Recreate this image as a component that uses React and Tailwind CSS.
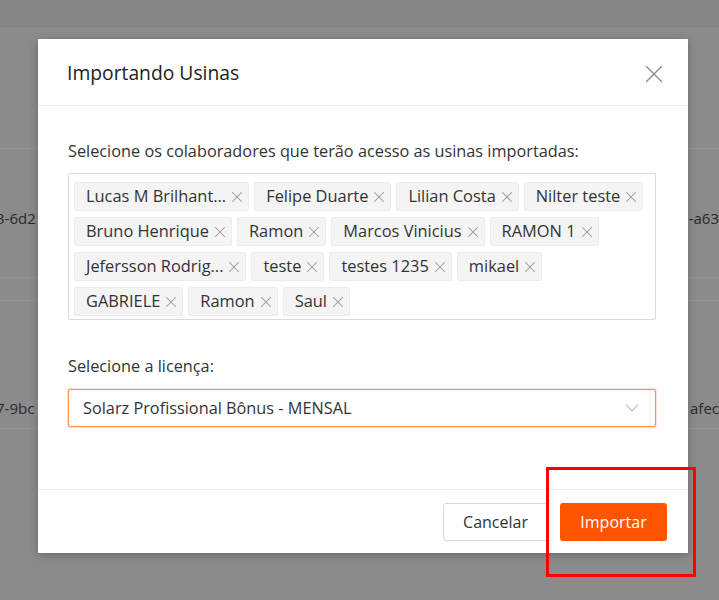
import { X, ChevronDown } from 'lucide-react';

const TAGS = [
  'Lucas M Brilhant...',
  'Felipe Duarte',
  'Lilian Costa',
  'Nilter teste',
  'Bruno Henrique',
  'Ramon',
  'Marcos Vinicius',
  'RAMON 1',
  'Jefersson Rodrig...',
  'teste',
  'testes 1235',
  'mikael',
  'GABRIELE',
  'Ramon',
  'Saul',
];

function Tag({ label }) {
  return (
    <span className="inline-flex items-center h-[29px] pl-[11px] pr-[2px] bg-[#f4f4f4] border border-[#ececec] rounded-[2px] text-[16.4px] text-[#333] leading-none">
      {label}
      <X className="ml-[2px] w-[18px] h-[18px] text-[#999]" strokeWidth={1.4} />
    </span>
  );
}

export default function App() {
  return (
    <div className="relative w-[719px] h-[600px] overflow-hidden bg-[#8b8b8b] font-['Open_Sans',sans-serif]">
      {/* ──────── Page behind the overlay ──────── */}
      <div className="h-[27px] bg-[#868686] border-b border-[#808080]" />
      <div className="h-[122px] border-b border-[#939393]" />
      <div className="h-[129px] border-b border-[#939393] pt-[58px] flex justify-between text-[15px] leading-[22px] text-[#2a2a2a]">
        <span className="-ml-[4px]">3-6d2</span>
        <span>-a63</span>
      </div>
      <div className="h-[23px] border-b border-[#939393]" />
      <div className="h-[128px] border-b border-[#939393] pt-[96px] flex justify-between text-[15px] leading-[22px] text-[#2a2a2a]">
        <span className="-ml-[4px]">7-9bc</span>
        <span>afec</span>
      </div>

      {/* ──────── Modal ──────── */}
      <div className="absolute left-[38px] top-[39px] w-[650px] bg-white shadow-[0_2px_8px_rgba(0,0,0,0.25)] flex flex-col">
        <div className="h-[67px] flex items-center justify-between pl-[29px] pr-[19px] border-b border-[#eeeeee]">
          <h2 className="text-[19.3px] font-medium text-[#222] mt-[3px]">Importando Usinas</h2>
          <X className="w-[30px] h-[30px] text-[#8c8c8c] mt-[3px]" strokeWidth={1.1} />
        </div>

        <div className="pl-[30px] pr-[32px] pt-[33px] pb-[62px]">
          <p className="text-[16.3px] text-[#333] leading-[24px] mb-[10px]">
            Selecione os colaboradores que terão acesso as usinas importadas:
          </p>
          <div className="border border-[#d9d9d9] rounded-[2px] px-[5px] pt-[8px] pb-[3px] min-h-[144px] flex flex-wrap gap-x-[5px] gap-y-[6px] content-start">
            {TAGS.map((t, i) => (
              <Tag key={i} label={t} />
            ))}
          </div>

          <p className="text-[16.3px] text-[#333] leading-[24px] mt-[34px] mb-[11px]">Selecione a licença:</p>
          <div className="h-[38px] border border-[#ff8c4f] rounded-[2px] shadow-[0_0_0_1px_rgba(255,140,79,0.25)] flex items-center justify-between pl-[14px] pr-[12px]">
            <span className="text-[16.3px] text-[#333]">Solarz Profissional Bônus - MENSAL</span>
            <ChevronDown className="w-[22px] h-[22px] text-[#c4c4c4]" strokeWidth={1.2} />
          </div>
        </div>

        <div className="border-t border-[#eeeeee] h-[64px] flex items-center justify-end gap-[12px] pr-[21px]">
          <button className="h-[38px] w-[105px] border border-[#d9d9d9] rounded-[3px] bg-white text-[16px] text-[#333]">
            Cancelar
          </button>
          <button className="h-[38px] w-[107px] rounded-[3px] bg-[#ff5500] text-[16px] text-white">
            Importar
          </button>
        </div>
      </div>

      {/* ──────── Highlight ──────── */}
      <div className="absolute left-[546px] top-[467px] w-[150px] h-[110px] border-[3px] border-[#ff0000]" />
    </div>
  );
}
